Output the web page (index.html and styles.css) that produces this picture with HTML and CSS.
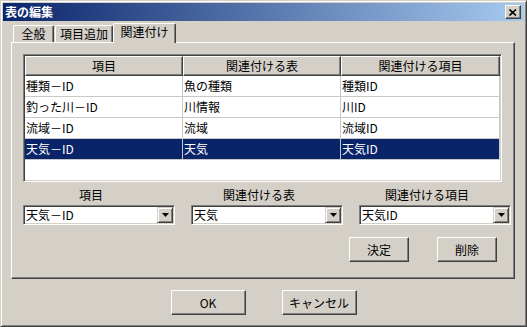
FILE: index.html
```html
<!DOCTYPE html>
<html lang="ja">
<head>
    <meta charset="UTF-8">
    <title>表の編集</title>
    <link rel="stylesheet" href="styles.css">
</head>
<body>
    <div class="window">
        <div class="titlebar">
            <span class="title">表の編集</span>
            <button class="close" type="button">
                <svg width="8" height="7" viewBox="0 0 8 7"><path d="M0.5 0.5 L7 6.5 M7 0.5 L0.5 6.5" stroke="#000" stroke-width="1.6" fill="none"/></svg>
            </button>
        </div>
        <div class="tabs">
            <div class="tab tab-1">全般</div>
            <div class="tab tab-2">項目追加</div>
            <div class="tab tab-active">関連付け</div>
        </div>
        <div class="panel">
            <div class="list">
                <div class="list-row list-head">
                    <div class="head-cell">項目</div>
                    <div class="head-cell">関連付ける表</div>
                    <div class="head-cell">関連付ける項目</div>
                </div>
                <div class="list-row">
                    <div class="cell">種類－ID</div>
                    <div class="cell">魚の種類</div>
                    <div class="cell">種類ID</div>
                </div>
                <div class="list-row">
                    <div class="cell">釣った川－ID</div>
                    <div class="cell">川情報</div>
                    <div class="cell">川ID</div>
                </div>
                <div class="list-row">
                    <div class="cell">流域－ID</div>
                    <div class="cell">流域</div>
                    <div class="cell">流域ID</div>
                </div>
                <div class="list-row selected">
                    <div class="cell">天気－ID</div>
                    <div class="cell">天気</div>
                    <div class="cell">天気ID</div>
                </div>
            </div>

            <div class="fields">
                <div class="field">
                    <div class="field-label">項目</div>
                    <div class="combo">
                        <span class="combo-text">天気－ID</span>
                        <span class="combo-btn"><svg width="7" height="4" viewBox="0 0 7 4"><polygon points="0,0 7,0 3.5,4" fill="#000"/></svg></span>
                    </div>
                </div>
                <div class="field">
                    <div class="field-label">関連付ける表</div>
                    <div class="combo">
                        <span class="combo-text">天気</span>
                        <span class="combo-btn"><svg width="7" height="4" viewBox="0 0 7 4"><polygon points="0,0 7,0 3.5,4" fill="#000"/></svg></span>
                    </div>
                </div>
                <div class="field">
                    <div class="field-label">関連付ける項目</div>
                    <div class="combo">
                        <span class="combo-text">天気ID</span>
                        <span class="combo-btn"><svg width="7" height="4" viewBox="0 0 7 4"><polygon points="0,0 7,0 3.5,4" fill="#000"/></svg></span>
                    </div>
                </div>
            </div>

            <div class="actions">
                <button class="btn btn-small" type="button">決定</button>
                <button class="btn btn-small" type="button">削除</button>
            </div>
        </div>
        <div class="footer">
            <button class="btn btn-main" type="button">OK</button>
            <button class="btn btn-main" type="button">キャンセル</button>
        </div>
    </div>
</body>
</html>
```

FILE: styles.css
```css
body {
    margin: 0;
    padding: 0;
    background-color: #d4d0c8;
    font-family: "Noto Sans CJK JP", "Liberation Sans", sans-serif;
    font-size: 12px;
    color: #000;
}
.window {
    width: 527px;
    height: 327px;
    box-sizing: border-box;
    background-color: #d4d0c8;
    border: 1px solid;
    border-color: #d4d0c8 #404040 #404040 #d4d0c8;
    box-shadow: inset 1px 1px #fff, inset -1px -1px #808080;
    padding: 2px;
}
.titlebar {
    height: 18px;
    display: flex;
    align-items: center;
    justify-content: space-between;
    background: linear-gradient(to right, #0a246a, #a6caf0);
}
.title {
    color: #fff;
    font-weight: bold;
    line-height: 18px;
    padding-left: 2px;
}
.close {
    width: 16px;
    height: 14px;
    margin-right: 3px;
    padding: 0;
    box-sizing: border-box;
    display: flex;
    align-items: center;
    justify-content: center;
    background-color: #d4d0c8;
    border: 1px solid;
    border-color: #fff #404040 #404040 #fff;
    box-shadow: inset -1px -1px #808080;
}
.tabs {
    display: flex;
    align-items: flex-end;
    height: 19px;
    margin: 2px 0 0 10px;
}
.tab {
    height: 17px;
    box-sizing: border-box;
    display: flex;
    align-items: center;
    justify-content: center;
    line-height: 14px;
    border: 1px solid;
    border-bottom: none;
    border-color: #fff #404040 #404040 #fff;
    box-shadow: inset -1px 0 #808080;
    border-radius: 2px 2px 0 0;
    background-color: #d4d0c8;
}
.tab-1 {
    width: 41px;
    margin-right: 1px;
}
.tab-2 {
    width: 58px;
}
.tab-active {
    width: 63px;
    height: 20px;
    margin-bottom: -1px;
    padding-bottom: 3px;
    position: relative;
    z-index: 1;
}
.panel {
    height: 237px;
    box-sizing: border-box;
    margin: 0 9px 0 8px;
    padding: 11px 3px 0 11px;
    border: 1px solid;
    border-color: #fff #404040 #404040 #fff;
    box-shadow: inset -1px -1px #808080;
}
.list {
    width: 479px;
    height: 128px;
    box-sizing: border-box;
    background-color: #fff;
    border: 1px solid;
    border-color: #808080 #fff #fff #808080;
    box-shadow: inset 1px 1px #404040, inset -1px -1px #d4d0c8;
    padding: 1px;
}
.list-row {
    display: grid;
    grid-template-columns: 158px 158px 159px;
}
.head-cell {
    height: 20px;
    box-sizing: border-box;
    background-color: #d4d0c8;
    border: 1px solid;
    border-color: #fff #404040 #404040 #fff;
    box-shadow: inset -1px -1px #808080;
    text-align: center;
    line-height: 17px;
}
.cell {
    height: 21px;
    box-sizing: border-box;
    border-right: 1px solid #c8c8c8;
    border-bottom: 1px solid #c8c8c8;
    padding-left: 1px;
    line-height: 20px;
    white-space: nowrap;
}
.selected .cell {
    background-color: #0a246a;
    color: #fff;
}
.fields {
    display: grid;
    grid-template-columns: 152px 152px 152px;
    column-gap: 16px;
    margin-top: 5px;
}
.field-label {
    height: 16px;
    line-height: 16px;
    text-align: center;
    padding-right: 16px;
    margin-bottom: 2px;
}
.combo {
    height: 20px;
    box-sizing: border-box;
    display: flex;
    align-items: center;
    background-color: #fff;
    border: 1px solid;
    border-color: #808080 #fff #fff #808080;
    box-shadow: inset 1px 1px #404040, inset -1px -1px #d4d0c8;
    padding: 1px;
}
.combo-text {
    flex: 1;
    padding-left: 1px;
    line-height: 16px;
}
.combo-btn {
    width: 16px;
    height: 16px;
    box-sizing: border-box;
    display: flex;
    align-items: center;
    justify-content: center;
    background-color: #d4d0c8;
    border: 1px solid;
    border-color: #d4d0c8 #404040 #404040 #d4d0c8;
    box-shadow: inset 1px 1px #fff, inset -1px -1px #808080;
}
.actions {
    display: flex;
    justify-content: flex-end;
    gap: 28px;
    margin-top: 12px;
    margin-right: 14px;
}
.btn {
    height: 25px;
    box-sizing: border-box;
    padding: 0;
    font-family: inherit;
    font-size: 12px;
    color: #000;
    background-color: #d4d0c8;
    border: 1px solid;
    border-color: #fff #404040 #404040 #fff;
    box-shadow: inset -1px -1px #808080;
}
.btn-small {
    width: 60px;
}
.btn-main {
    width: 75px;
}
.footer {
    display: flex;
    justify-content: center;
    gap: 36px;
    margin-top: 11px;
}
```
